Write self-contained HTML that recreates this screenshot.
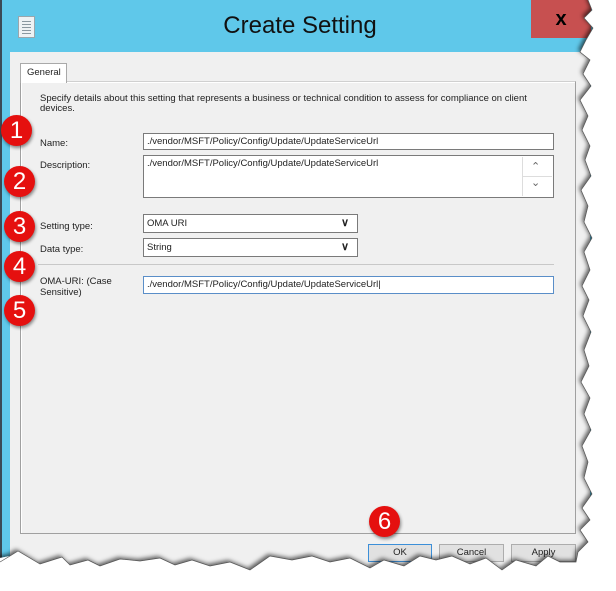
<!DOCTYPE html>
<html><head><meta charset="utf-8"><style>
*{margin:0;padding:0;box-sizing:border-box}
body{width:616px;height:591px;background:#fff;position:relative;overflow:hidden;font-family:"Liberation Sans",sans-serif;font-size:9.5px;color:#222}
.a{position:absolute}
.inp{position:absolute;background:#fff;border:1px solid #7a7a7a;padding:2px 3px;font-size:9.5px;white-space:nowrap}
.c{position:absolute;width:31px;height:31px;border-radius:50%;background:#e5100f;color:#fff;font-size:24px;text-align:center;line-height:31px;box-shadow:1px 2px 3px rgba(0,0,0,.45)}
.btn{position:absolute;height:18px;background:#e1e1e1;border:1px solid #adadad;text-align:center;line-height:16px;font-size:9.5px}
</style></head><body>
<div class="a" style="left:0;top:0;width:595px;height:575px;background:#5fc8ea;border-left:2px solid #3b4a55"></div>
<div class="a" style="left:531px;top:0;width:60px;height:38px;background:#c75050;color:#000;font-size:20px;font-weight:bold;text-align:center;line-height:38px">x</div>
<div class="a" style="left:18px;top:16px;width:17px;height:22px;background:#eef2f4;border:1px solid #9aa6ac"></div>
<div class="a" style="left:22px;top:21px;width:9px;height:1px;background:#8a98a0;box-shadow:0 3px #8a98a0,0 6px #8a98a0,0 9px #8a98a0,0 12px #8a98a0"></div>
<div class="a" style="left:0;top:12px;width:600px;text-align:center;font-size:24px;color:#111">Create Setting</div>
<div class="a" style="left:10px;top:52px;width:580px;height:520px;background:#f0f0f0"></div>
<div class="a" style="left:20px;top:81px;width:556px;height:453px;border:1px solid #a0a0a0;border-top-color:#d0d0d0;background:#f0f0f0;box-shadow:inset 1px 1px #fff"></div>
<div class="a" style="left:20px;top:63px;width:47px;height:20px;border:1px solid #a9a9a9;border-bottom:none;background:#fff;padding:3px 0 0 6px;font-size:9.5px">General</div>
<div class="a" style="left:40px;top:94px;width:500px;line-height:10px">Specify details about this setting that represents a business or technical condition to assess for compliance on client devices.</div>
<div class="a" style="left:40px;top:138px">Name:</div>
<div class="inp" style="left:143px;top:133px;width:411px;height:17px">./vendor/MSFT/Policy/Config/Update/UpdateServiceUrl</div>
<div class="a" style="left:40px;top:160px">Description:</div>
<div class="inp" style="left:143px;top:155px;width:411px;height:43px">./vendor/MSFT/Policy/Config/Update/UpdateServiceUrl</div>
<div class="a" style="left:522px;top:157px;width:30px;height:39px;border-left:1px solid #ddd"></div>
<div class="a" style="left:522px;top:176px;width:30px;height:1px;background:#ddd"></div>
<div class="a" style="left:531px;top:160px;color:#666;font-size:11px">&#8963;</div>
<div class="a" style="left:531px;top:176px;color:#666;font-size:11px">&#8964;</div>
<div class="a" style="left:40px;top:221px">Setting type:</div>
<div class="inp" style="left:143px;top:214px;width:215px;height:19px;padding-top:3px">OMA URI<span style="position:absolute;right:8px;top:1px;font-weight:bold;font-size:11px">&#8744;</span></div>
<div class="a" style="left:40px;top:244px">Data type:</div>
<div class="inp" style="left:143px;top:238px;width:215px;height:19px;padding-top:3px">String<span style="position:absolute;right:8px;top:1px;font-weight:bold;font-size:11px">&#8744;</span></div>
<div class="a" style="left:38px;top:264px;width:516px;height:1px;background:#c8c8c8"></div>
<div class="a" style="left:40px;top:276px;line-height:11px">OMA-URI: (Case<br>Sensitive)</div>
<div class="inp" style="left:143px;top:276px;width:411px;height:18px;border-color:#5a8ec8">./vendor/MSFT/Policy/Config/Update/UpdateServiceUrl|</div>
<div class="btn" style="left:368px;top:544px;width:64px;border-color:#3c8fd8">OK</div>
<div class="btn" style="left:439px;top:544px;width:65px">Cancel</div>
<div class="btn" style="left:511px;top:544px;width:65px">Apply</div>
<svg class="a" style="left:0;top:0" width="616" height="591">
<defs><filter id="s" x="-10%" y="-10%" width="120%" height="120%"><feDropShadow dx="-2" dy="-2" stdDeviation="2" flood-color="#000" flood-opacity=".6"/></filter></defs>
<path id="t" filter="url(#s)" fill="#fff" d="M640 -20 L588 -20 L588 0 L592 10 L584 18 L593 28 L586 40 L580 52 L590 60 L583 74 L591 86 L580 100 L588 116 L582 130 L590 146 L585 160 L591 176 L581 190 L588 206 L584 222 L592 238 L584 252 L590 270 L582 286 L589 300 L583 316 L591 332 L584 350 L589 366 L581 382 L590 398 L584 414 L591 430 L582 446 L588 462 L584 478 L592 494 L582 508 L590 520 L580 530 L588 542 L578 552 L576 562 L560 562 L548 556 L536 566 L516 560 L502 570 L486 558 L470 564 L452 556 L436 560 L420 556 L404 566 L384 560 L370 568 L350 558 L330 562 L312 556 L292 560 L270 556 L250 570 L230 562 L210 566 L192 560 L175 565 L160 558 L140 561 L120 559 L100 566 L88 560 L70 565 L62 557 L40 564 L18 551 L10 556 L-20 562 L-20 620 L640 620 Z"/>
<polyline fill="none" stroke="#555" stroke-width=".7" points="588 0 592 10 584 18 593 28 586 40 580 52 590 60 583 74 591 86 580 100 588 116 582 130 590 146 585 160 591 176 581 190 588 206 584 222 592 238 584 252 590 270 582 286 589 300 583 316 591 332 584 350 589 366 581 382 590 398 584 414 591 430 582 446 588 462 584 478 592 494 582 508 590 520 580 530 588 542 578 552 576 562 560 562 548 556 536 566 516 560 502 570 486 558 470 564 452 556 436 560 420 556 404 566 384 560 370 568 350 558 330 562 312 556 292 560 270 556 250 570 230 562 210 566 192 560 175 565 160 558 140 561 120 559 100 566 88 560 70 565 62 557 40 564 18 551 10 556 0 562"/>
</svg>
<div class="c" style="left:1px;top:115px">1</div>
<div class="c" style="left:4px;top:166px">2</div>
<div class="c" style="left:4px;top:211px">3</div>
<div class="c" style="left:4px;top:251px">4</div>
<div class="c" style="left:4px;top:295px">5</div>
<div class="c" style="left:369px;top:506px">6</div>
</body></html>
